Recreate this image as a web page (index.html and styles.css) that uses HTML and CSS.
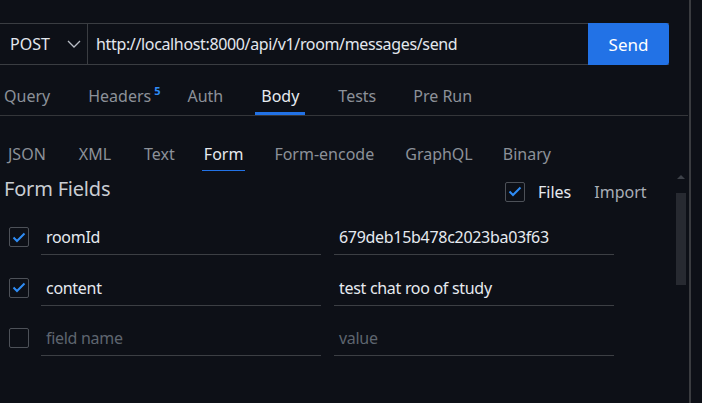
FILE: index.html
```html
<!DOCTYPE html>
<html>
<head>
<meta charset="utf-8">
<link rel="stylesheet" href="styles.css">
</head>
<body>
<div class="app">
  <div class="main">
    <div class="urlbar">
      <div class="method">
        <span class="method-name">POST</span>
        <svg class="chev" width="14" height="8" viewBox="0 0 14 8"><path d="M1 1 L7 7 L13 1" fill="none" stroke="#b9bec6" stroke-width="1.3"/></svg>
      </div>
      <div class="url">http://localhost:8000/api/v1/room/messages/send</div>
      <button class="send">Send</button>
    </div>
    <div class="tabs">
      <span class="tab t-query">Query</span>
      <span class="tab t-headers">Headers<sup class="badge">5</sup></span>
      <span class="tab t-auth">Auth</span>
      <span class="tab t-body active">Body</span>
      <span class="tab t-tests">Tests</span>
      <span class="tab t-prerun">Pre Run</span>
    </div>
    <div class="subtabs">
      <span class="stab s-json">JSON</span>
      <span class="stab s-xml">XML</span>
      <span class="stab s-text">Text</span>
      <span class="stab s-form active">Form</span>
      <span class="stab s-fe">Form-encode</span>
      <span class="stab s-gql">GraphQL</span>
      <span class="stab s-bin">Binary</span>
    </div>
    <div class="scrollarea">
      <div class="content">
        <div class="header">
          <span class="title">Form Fields</span>
          <div class="opts">
            <span class="cb checked"><svg width="14" height="11" viewBox="0 0 14 11"><path d="M1.5 5.5 L5 9 L12.5 1.5" fill="none" stroke="#2f8cf5" stroke-width="2"/></svg></span>
            <span class="opt-files">Files</span>
            <span class="opt-import">Import</span>
          </div>
        </div>
        <div class="row">
          <span class="cb checked"><svg width="14" height="11" viewBox="0 0 14 11"><path d="M1.5 5.5 L5 9 L12.5 1.5" fill="none" stroke="#2f8cf5" stroke-width="2"/></svg></span>
          <div class="field name">roomId</div>
          <div class="field value">679deb15b478c2023ba03f63</div>
        </div>
        <div class="row">
          <span class="cb checked"><svg width="14" height="11" viewBox="0 0 14 11"><path d="M1.5 5.5 L5 9 L12.5 1.5" fill="none" stroke="#2f8cf5" stroke-width="2"/></svg></span>
          <div class="field name">content</div>
          <div class="field value">test chat roo of study</div>
        </div>
        <div class="row">
          <span class="cb"></span>
          <div class="field name ph">field name</div>
          <div class="field value ph">value</div>
        </div>
      </div>
      <div class="scrollbar">
        <svg class="arrow" width="8" height="4" viewBox="0 0 8 4"><path d="M0 4 L4 0 L8 4 Z" fill="#3d4148"/></svg>
        <div class="thumb"></div>
      </div>
    </div>
  </div>
  <div class="divider"></div>
</div>
</body>
</html>
```
FILE: styles.css
```css
* { box-sizing: border-box; }
html, body { margin: 0; padding: 0; }
body {
  background: #0d1017;
  font-family: "Noto Sans", "Open Sans", sans-serif;
  color: #dfe3ea;
  width: 702px;
  height: 403px;
  overflow: hidden;
}
.app {
  display: flex;
  height: 403px;
}
.main {
  width: 689px;
  padding-top: 23px;
}
.divider {
  width: 2px;
  background: #3a3c40;
  height: 403px;
}
.urlbar {
  display: flex;
  height: 42px;
  width: 669px;
  border-top: 1px solid #3a3d42;
  border-bottom: 1px solid #3a3d42;
}
.method {
  width: 88px;
  display: flex;
  align-items: center;
  border-right: 1px solid #3a3d42;
  padding-left: 10px;
}
.method-name {
  font-size: 16px;
  color: #e3e7ee;
  width: 54px;
}
.chev { margin-left: 3px; }
.url {
  flex: 1;
  display: flex;
  align-items: center;
  padding-left: 8px;
  font-size: 16px;
  color: #e3e7ee;
  letter-spacing: -0.35px;
}
.send {
  width: 81px;
  margin: -1px 0;
  height: 42px;
  border: none;
  border-radius: 0 3px 3px 0;
  background: #2272e6;
  color: #ffffff;
  font-family: inherit;
  font-size: 17px;
  padding: 0;
}
.tabs {
  height: 51px;
  width: 688px;
  border-bottom: 1px solid #34363a;
  display: flex;
  align-items: flex-end;
}
.tab {
  font-size: 16px;
  color: #8c9199;
  height: 30px;
  line-height: 22px;
  padding: 0 6px;
  border-bottom: 3px solid transparent;
}
.tab.active {
  color: #e6eaf0;
  border-bottom-color: #2272e6;
}
.t-query { margin-left: -2px; }
.t-headers { margin-left: 26px; }
.t-auth { margin-left: 15px; }
.t-body { margin-left: 26px; }
.t-tests { margin-left: 27px; }
.t-prerun { margin-left: 25px; }
.badge {
  font-size: 11px;
  font-weight: bold;
  color: #2f8cf5;
  vertical-align: 0;
  position: relative;
  top: -7px;
  margin-left: 3px;
}
.subtabs {
  display: flex;
  align-items: flex-end;
  height: 55px;
}
.stab {
  font-size: 16px;
  color: #8c9199;
  height: 28px;
  line-height: 22px;
  padding: 0 2px;
  border-bottom: 1px solid transparent;
}
.stab.active {
  color: #e6eaf0;
  border-bottom-color: #2272e6;
}
.s-json { margin-left: 6px; }
.s-xml { margin-left: 29px; }
.s-text { margin-left: 29px; }
.s-form { margin-left: 25px; }
.s-fe { margin-left: 27px; }
.s-gql { margin-left: 27px; }
.s-bin { margin-left: 26px; }
.scrollarea {
  display: flex;
  height: 233px;
}
.content {
  width: 676px;
}
.header {
  display: flex;
  align-items: center;
  height: 34px;
  padding-top: 1px;
}
.title {
  font-size: 20px;
  color: #c9cdd3;
  padding-left: 4px;
  width: 505px;
  line-height: 28px;
  letter-spacing: -0.2px;
}
.opts {
  display: flex;
  align-items: center;
  font-size: 16px;
  margin-top: 6px;
}
.opt-files { margin-left: 13px; color: #e6eaf0; }
.opt-import { margin-left: 23px; color: #a9aeb6; }
.cb {
  width: 20px;
  height: 20px;
  border: 1px solid #4d5158;
  border-radius: 2px;
  display: flex;
  align-items: center;
  justify-content: center;
  flex-shrink: 0;
}
.row {
  display: flex;
  align-items: flex-start;
  height: 50.5px;
  padding-left: 9px;
}
.header + .row { margin-top: 22px; }
.row .cb { margin-top: 0; }
.field {
  height: 28px;
  border-bottom: 1px solid #3c3f44;
  font-size: 16px;
  color: #e6eaf0;
  padding-left: 5px;
  line-height: 20px;
  letter-spacing: -0.3px;
}
.field.name { width: 280px; margin-left: 12px; }
.field.value { width: 280px; margin-left: 13px; }
.field.ph { color: #5e656f; }
.scrollbar {
  width: 10px;
  display: flex;
  flex-direction: column;
  align-items: center;
}
.arrow { margin-top: 4px; }
.thumb {
  margin-top: 14px;
  width: 10px;
  height: 92px;
  background: #272a31;
}
```
